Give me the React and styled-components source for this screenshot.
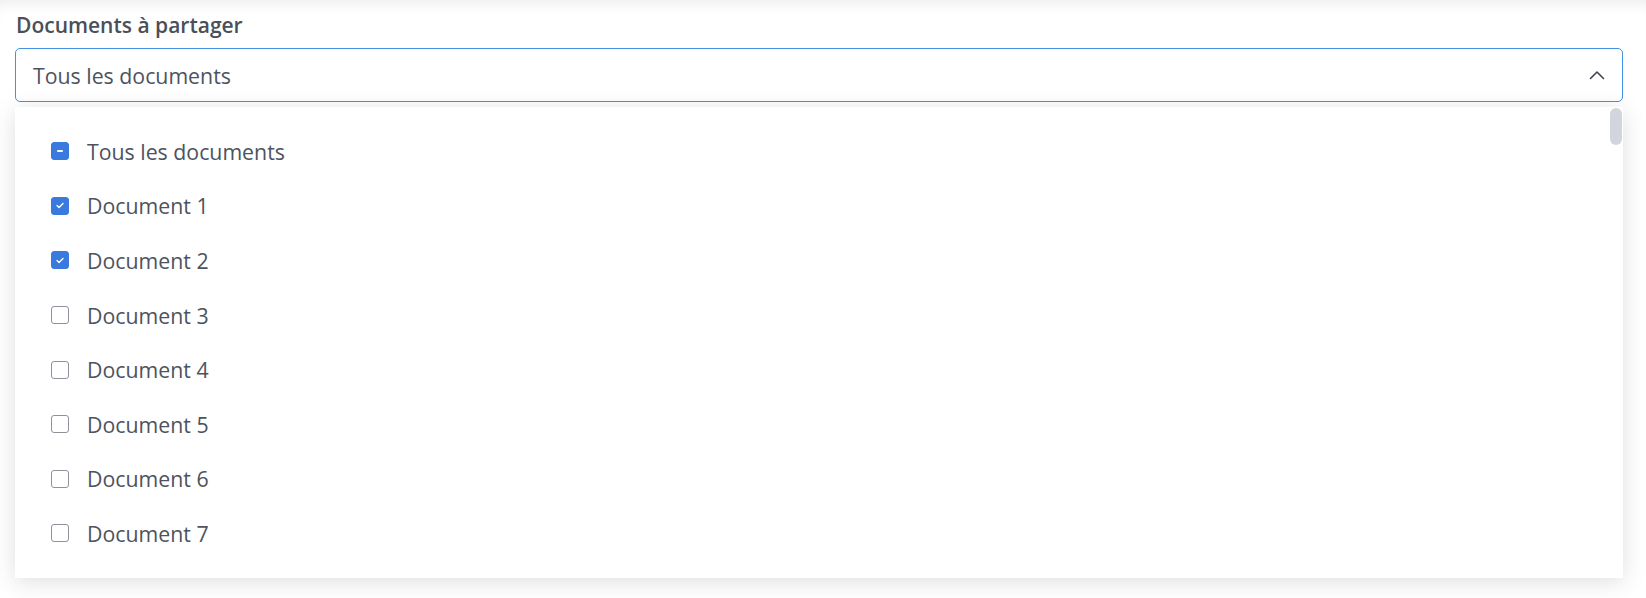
import React from "react";
import styled, { createGlobalStyle } from "styled-components";

const GlobalStyle = createGlobalStyle`
  html, body { margin: 0; padding: 0; background: #ffffff; }
  body { font-family: "Open Sans", "Liberation Sans", sans-serif; }
  * { box-sizing: border-box; }
`;

const Page = styled.div`
  width: 1646px;
  height: 598px;
  padding: 11px 23px 0 15px;
  background: #ffffff;
  box-shadow: inset 0 14px 16px -12px rgba(0, 0, 0, 0.09);
  overflow: hidden;
`;

const Field = styled.div`
  display: flex;
  flex-direction: column;
`;

const Label = styled.div`
  font-size: 21px;
  font-weight: 600;
  color: #4a4f59;
  line-height: 28px;
  margin-left: 1px;
  margin-bottom: 9px;
`;

const SelectBox = styled.div`
  height: 54px;
  border: 1px solid #4191e6;
  border-radius: 5px;
  background: #ffffff;
  display: flex;
  align-items: center;
  justify-content: space-between;
  padding: 0 17px 0 17px;
  font-size: 21.3px;
  color: #4d535e;
`;

const Chevron = styled.svg`
  width: 16px;
  height: 10px;
  display: block;
`;

const Panel = styled.div`
  position: relative;
  z-index: 1;
  margin-top: 5px;
  background: #ffffff;
  padding: 17px 0 17px 36px;
  box-shadow: 0 4px 22px rgba(0, 0, 0, 0.13);
`;

const Thumb = styled.div`
  position: absolute;
  top: 1px;
  right: 1px;
  width: 12px;
  height: 37px;
  border-radius: 6px;
  background: #d2d6dc;
`;

const Row = styled.div`
  height: 54.6px;
  display: flex;
  align-items: center;
  gap: 18px;
  font-size: 21.3px;
  color: #4d535e;
`;

const Box = styled.span`
  width: 18px;
  height: 18px;
  border-radius: 3px;
  flex: none;
  display: flex;
  align-items: center;
  justify-content: center;
  background: ${(p) => (p.$on ? "#3a7ade" : "#ffffff")};
  border: 1px solid ${(p) => (p.$on ? "#3a7ade" : "#8d929b")};
`;

const Dash = styled.span`
  width: 6px;
  height: 2px;
  border-radius: 1px;
  background: #ffffff;
`;

const CheckMark = () => (
  <svg width="8" height="7" viewBox="0 0 8 7">
    <path d="M1 3.6 L3 5.4 L7 1.4" fill="none" stroke="#fff" strokeWidth="1.4" strokeLinecap="round" strokeLinejoin="round" />
  </svg>
);

const items = [
  { label: "Tous les documents", state: "partial" },
  { label: "Document 1", state: "on" },
  { label: "Document 2", state: "on" },
  { label: "Document 3", state: "off" },
  { label: "Document 4", state: "off" },
  { label: "Document 5", state: "off" },
  { label: "Document 6", state: "off" },
  { label: "Document 7", state: "off" },
];

export default function App() {
  return (
    <>
      <GlobalStyle />
      <Page>
        <Field>
          <Label>Documents à partager</Label>
          <SelectBox>
            <span>Tous les documents</span>
            <Chevron viewBox="0 0 16 10">
              <path d="M1.5 8.5 L8 2 L14.5 8.5" fill="none" stroke="#3d4350" strokeWidth="1.6" strokeLinecap="round" strokeLinejoin="round" />
            </Chevron>
          </SelectBox>
          <Panel>
            <Thumb />
            {items.map((it) => (
              <Row key={it.label}>
                <Box $on={it.state !== "off"}>
                  {it.state === "partial" && <Dash />}
                  {it.state === "on" && <CheckMark />}
                </Box>
                <span>{it.label}</span>
              </Row>
            ))}
          </Panel>
        </Field>
      </Page>
    </>
  );
}
